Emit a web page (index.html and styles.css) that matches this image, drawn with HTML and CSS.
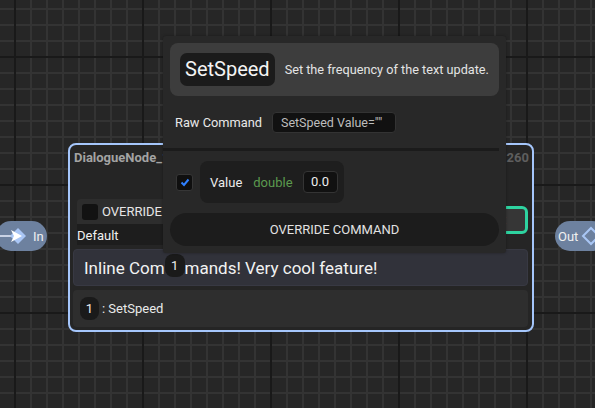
FILE: index.html
```html
<!DOCTYPE html>
<html>
<head>
<meta charset="utf-8">
<link rel="stylesheet" href="styles.css">
</head>
<body>
<div class="canvas">
  <div class="pin pin-in">
    <svg class="pin-icon-in" width="30" height="30" viewBox="0 0 30 30">
      <line x1="0" y1="15" x2="12" y2="15" stroke="#e8eefc" stroke-width="1.5"/>
      <polygon points="18,7 26,15 18,23 10,15" fill="#a9c6f5"/>
      <polygon points="11,9 22,15 11,21 14,15" fill="#ffffff"/>
    </svg>
    <span class="pin-label">In</span>
  </div>
  <div class="pin pin-out">
    <span class="pin-label">Out</span>
    <svg class="pin-icon-out" width="20" height="30" viewBox="0 0 20 30">
      <polygon points="10,7 18,15 10,23 2,15" fill="none" stroke="#a9c6f5" stroke-width="2"/>
    </svg>
  </div>

  <div class="node">
    <div class="node-head">
      <span class="node-title">DialogueNode_1</span>
      <span class="node-id">260</span>
    </div>
    <div class="node-body">
      <div class="override-area">
        <div class="override-left">
          <div class="override-row">
            <span class="box"></span>
            <span class="override-label">OVERRIDE</span>
          </div>
          <div class="default-row">Default</div>
        </div>
        <div class="edit-btn">Edit</div>
      </div>
      <div class="inline-box">
        <span class="inline-text">Inline Com</span><span class="badge badge-inline">1</span><span class="inline-text">mands! Very cool feature!</span>
      </div>
      <div class="cmd-row">
        <span class="badge">1</span>
        <span class="cmd-text">: SetSpeed</span>
      </div>
    </div>
  </div>

  <div class="popup">
    <div class="pop-head">
      <span class="chip">SetSpeed</span>
      <span class="pop-desc">Set the frequency of the text update.</span>
    </div>
    <div class="raw-row">
      <span class="raw-label">Raw Command</span>
      <span class="raw-input">SetSpeed Value=""</span>
    </div>
    <div class="sep"></div>
    <div class="value-row">
      <span class="check">
        <svg width="12" height="12" viewBox="0 0 12 12"><polyline points="2.5,6.5 5,9 9.5,3.5" fill="none" stroke="#2f80ff" stroke-width="2"/></svg>
      </span>
      <div class="value-panel">
        <span class="value-label">Value</span>
        <span class="value-type">double</span>
        <span class="value-input">0.0</span>
      </div>
    </div>
    <div class="override-btn">OVERRIDE COMMAND</div>
  </div>
</div>
</body>
</html>
```

FILE: styles.css
```css
* { box-sizing: border-box; }
html, body {
  margin: 0;
  padding: 0;
  width: 595px;
  height: 408px;
  overflow: hidden;
}
body {
  font-family: Roboto, "Noto Sans", sans-serif;
  color: #e6e6e6;
  background-color: #262626;
  background-image:
    linear-gradient(to right, #191919 2px, transparent 2px),
    linear-gradient(to bottom, #191919 2px, transparent 2px),
    linear-gradient(to right, #333333 2px, transparent 2px),
    linear-gradient(to bottom, #333333 2px, transparent 2px);
  background-size: 128px 128px, 128px 128px, 16px 16px, 16px 16px;
  background-position: 14px 0, 0 56px, 14px 0, 0 8px;
}
.canvas {
  position: relative;
  width: 595px;
  height: 408px;
}

/* pins */
.pin {
  position: absolute;
  top: 221px;
  height: 30px;
  border-radius: 15px;
  background: #6d819f;
  display: flex;
  align-items: center;
  font-size: 13px;
  color: #f0f0f0;
}
.pin-in {
  left: -4px;
  width: 51px;
  padding-left: 4px;
}
.pin-icon-in { display: block; margin-right: 3px; }
.pin-out {
  left: 555px;
  width: 52px;
  padding-left: 3px;
}
.pin-icon-out { display: block; margin-left: 3px; }

/* node */
.node {
  position: absolute;
  left: 68px;
  top: 143px;
  width: 466px;
  border: 2px solid #a5c6fb;
  border-radius: 8px;
  background: #252525;
  padding: 5px 4px 3px 3px;
}
.node-head {
  display: flex;
  justify-content: space-between;
  height: 16px;
  line-height: 16px;
  font-size: 13px;
  font-weight: bold;
  padding-left: 1px;
  margin-bottom: 33px;
}
.node-title { color: #a3a3a3; }
.node-id { color: #5e5e5e; margin-right: -1px; }
.override-area {
  display: flex;
  justify-content: space-between;
  align-items: flex-start;
  padding-left: 4px;
}
.override-left { width: 220px; }
.override-row {
  height: 25px;
  background: #2d2d2d;
  border-radius: 4px 4px 0 0;
  display: flex;
  align-items: center;
  padding-left: 5px;
  font-size: 13px;
}
.box {
  width: 16px;
  height: 16px;
  background: #121212;
  border-radius: 3px;
  margin-right: 4px;
}
.default-row {
  height: 21px;
  background: #1d1d1d;
  font-size: 13px;
  line-height: 23px;
  color: #f0f0f0;
}
.edit-btn {
  margin-top: 7px;
  width: 60px;
  height: 28px;
  border: 3px solid #2ed3a0;
  border-radius: 6px;
  background: #363636;
  font-size: 13px;
  line-height: 22px;
  text-align: right;
  padding-right: 19px;
  color: #ddd;
}
.inline-box {
  margin-top: 4px;
  height: 37px;
  background: #31323a;
  border: 1px solid #383943;
  border-radius: 4px;
  padding-left: 10px;
  display: flex;
  align-items: center;
}
.inline-text {
  font-size: 17px;
  color: #f2f2f2;
  white-space: pre;
}
.badge {
  display: inline-flex;
  align-items: center;
  justify-content: center;
  width: 19px;
  height: 23px;
  border-radius: 8px;
  background: #1a1a1a;
  font-size: 13px;
  color: #eee;
}
.badge-inline {
  width: 20px;
  margin-bottom: 4px;
}
.cmd-row {
  margin-top: 4px;
  height: 37px;
  background: #2e2e2e;
  border-radius: 4px;
  display: flex;
  align-items: center;
  padding-left: 7px;
}
.cmd-text {
  font-size: 13px;
  margin-left: 3px;
  color: #eaeaea;
}

/* popup */
.popup {
  position: absolute;
  left: 163px;
  top: 36px;
  width: 343px;
  height: 217px;
  background: #282828;
  border-radius: 3px;
  box-shadow: 0 0 3px rgba(0,0,0,0.35);
  padding: 7px;
}
.pop-head {
  height: 53px;
  background: #3d3d3d;
  border-radius: 8px;
  display: flex;
  align-items: center;
  padding-left: 10px;
}
.chip {
  height: 33px;
  padding: 0 5px;
  background: #1b1b1b;
  border-radius: 7px;
  font-size: 20px;
  line-height: 33px;
  color: #f4f4f4;
  margin-right: 10px;
}
.pop-desc {
  font-size: 12.7px;
  color: #e4e4e4;
}
.raw-row {
  height: 52px;
  display: flex;
  align-items: center;
  padding-left: 5px;
}
.raw-label {
  font-size: 12.8px;
  color: #e8e8e8;
  margin-right: 10px;
}
.raw-input {
  height: 21px;
  width: 124px;
  background: #111111;
  border: 1px solid #333;
  border-radius: 4px;
  font-size: 12.5px;
  line-height: 19px;
  padding-left: 8px;
  color: #bdbdbd;
  white-space: nowrap;
}
.sep {
  height: 3px;
  background: #1b1b1b;
  margin-left: -7px;
}
.value-row {
  margin-top: 10px;
  display: flex;
  align-items: center;
  padding-left: 6px;
}
.check {
  width: 17px;
  height: 17px;
  background: #0f0f0f;
  border: 1px solid #363636;
  border-radius: 3px;
  display: flex;
  align-items: center;
  justify-content: center;
  margin-right: 7px;
}
.value-panel {
  width: 144px;
  height: 42px;
  background: #1e1e1e;
  border-radius: 8px;
  display: flex;
  align-items: center;
  padding-left: 10px;
}
.value-label {
  font-size: 13px;
  color: #ececec;
  margin-right: 11px;
}
.value-type {
  font-size: 13px;
  color: #5c9a4e;
  margin-right: 10px;
}
.value-input {
  width: 35px;
  height: 22px;
  background: #111;
  border: 1px solid #343434;
  border-radius: 4px;
  font-size: 13px;
  line-height: 20px;
  text-align: center;
  color: #eee;
}
.override-btn {
  margin-top: 10px;
  height: 33px;
  border-radius: 17px;
  background: #1c1c1c;
  font-size: 13px;
  line-height: 33px;
  text-align: center;
  color: #e2e2e2;
}
```
